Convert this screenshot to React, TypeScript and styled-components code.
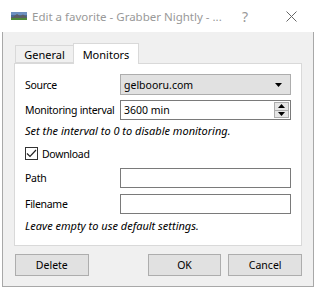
import React from "react";
import styled, { createGlobalStyle } from "styled-components";

const Global = createGlobalStyle`
  html, body { margin: 0; padding: 0; background: #ffffff; }
  body { font-family: "Noto Sans", "Open Sans", sans-serif; font-size: 10.5px; color: #000; }
  * { box-sizing: border-box; }
`;

const Window = styled.div`
  margin-left: 2px;
  width: 312px;
  height: 287px;
  display: flex;
  flex-direction: column;
`;

const TitleBar = styled.div`
  height: 32px;
  background: #fff;
  display: flex;
  align-items: center;
  padding-left: 9px;
  flex-shrink: 0;
`;

const TitleText = styled.span`
  margin-left: 5px;
  color: #999999;
  font-size: 11.5px;
  white-space: nowrap;
  flex: 1;
`;

const TitleButton = styled.span<{ $w: number }>`
  width: ${(p) => p.$w}px;
  display: flex;
  justify-content: center;
  align-items: center;
  color: #999;
  font-size: 14px;
`;

const Body = styled.div`
  flex: 1;
  background: #f0f0f0;
  border: 1px solid #a8a8a8;
  border-top: none;
  padding: 11px 11px 0 11px;
  display: flex;
  flex-direction: column;
`;

const TabBar = styled.div`
  display: flex;
  align-items: flex-end;
  height: 20px;
  padding-left: 1px;
  position: relative;
  z-index: 1;
  flex-shrink: 0;
`;

const Tab = styled.div<{ $active?: boolean }>`
  height: ${(p) => (p.$active ? 21 : 18)}px;
  margin-bottom: ${(p) => (p.$active ? -1 : 0)}px;
  width: ${(p) => (p.$active ? 66 : 58)}px;
  justify-content: center;
  background: ${(p) => (p.$active ? "#fff" : "#f0f0f0")};
  border: 1px solid #d9d9d9;
  border-bottom: ${(p) => (p.$active ? "none" : "1px solid #d9d9d9")};
  ${(p) => (p.$active ? "" : "border-right: none;")}
  display: flex;
  align-items: center;
  line-height: 1;
  font-size: 11px;
`;

const Panel = styled.div`
  height: 183px;
  flex-shrink: 0;
  background: #fff;
  border: 1px solid #d9d9d9;
  padding: 10px 10px 0 10px;
  display: flex;
  flex-direction: column;
`;

const Row = styled.div<{ $mt?: number; $h?: number }>`
  display: grid;
  grid-template-columns: 95px 1fr;
  align-items: center;
  height: ${(p) => p.$h ?? 20}px;
  margin-top: ${(p) => p.$mt ?? 0}px;
  white-space: nowrap;
  flex-shrink: 0;
`;

const Label = styled.span`
  font-size: 10.5px;
  letter-spacing: -0.3px;
`;

const Note = styled.div<{ $mt?: number }>`
  font-style: italic;
  font-size: 11px;
  margin-top: ${(p) => p.$mt ?? 0}px;
  height: 14px;
  line-height: 14px;
  white-space: nowrap;
  flex-shrink: 0;
`;

const Combo = styled.div`
  height: 21px;
  background: #e1e1e1;
  border: 1px solid #adadad;
  display: flex;
  align-items: center;
  justify-content: space-between;
  padding: 0 8px 0 3px;
  font-size: 10.5px;
`;

const Spin = styled.div`
  height: 20px;
  border: 1px solid #7a7a7a;
  display: flex;
  align-items: center;
  padding-left: 3px;
  justify-content: space-between;
  font-size: 10.5px;
`;

const SpinButtons = styled.div`
  width: 15px;
  height: 16px;
  margin-right: 1px;
  display: flex;
  flex-direction: column;
  border: 1px solid #adadad;
  background: #e5e5e5;
`;

const SpinHalf = styled.div<{ $top?: boolean }>`
  flex: 1;
  display: flex;
  align-items: center;
  justify-content: center;
  ${(p) => (p.$top ? "border-bottom: 1px solid #adadad;" : "")}
`;

const Input = styled.div`
  height: 20px;
  border: 1px solid #7a7a7a;
  background: #fff;
`;

const CheckRow = styled.label`
  display: flex;
  align-items: center;
  margin-top: 9px;
  height: 13px;
  flex-shrink: 0;
`;

const CheckBox = styled.span`
  width: 13px;
  height: 13px;
  border: 1px solid #333;
  background: #fff;
  display: flex;
  align-items: center;
  justify-content: center;
  margin-right: 4px;
`;

const Footer = styled.div`
  display: flex;
  margin-top: 8px;
  padding: 0 0 0 1px;
`;

const Button = styled.div<{ $ml?: number }>`
  width: 74px;
  height: 22px;
  background: #e1e1e1;
  border: 1px solid #adadad;
  display: flex;
  align-items: center;
  justify-content: center;
  margin-left: ${(p) => p.$ml ?? 0}px;
`;

const Arrow = ({ up, size = 7 }: { up?: boolean; size?: number }) => (
  <svg width={size} height={4} viewBox="0 0 7 4">
    {up ? <polygon points="3.5,0 7,4 0,4" fill="#000" /> : <polygon points="0,0 7,0 3.5,4" fill="#000" />}
  </svg>
);

const AppIcon = () => (
  <svg width="16" height="8" viewBox="0 0 16 8">
    <rect x="0" y="0" width="16" height="8" fill="#4a6b9a" />
    <rect x="0" y="0" width="16" height="3" fill="#6d8fc0" />
    <polygon points="2,5 6,2 9,4 12,2.5 16,5 16,8 0,8 0,5" fill="#5c5f66" />
    <rect x="0" y="6" width="16" height="2" fill="#4f8a3a" />
  </svg>
);

export default function App() {
  return (
    <>
      <Global />
      <Window>
        <TitleBar>
          <AppIcon />
          <TitleText>Edit a favorite - Grabber Nightly - ...</TitleText>
          <TitleButton $w={46}>?</TitleButton>
          <TitleButton $w={46}>
            <svg width="11" height="11" viewBox="0 0 11 11">
              <path d="M0.5 0.5 L10.5 10.5 M10.5 0.5 L0.5 10.5" stroke="#666" strokeWidth="1" />
            </svg>
          </TitleButton>
        </TitleBar>
        <Body>
          <TabBar>
            <Tab>General</Tab>
            <Tab $active>Monitors</Tab>
          </TabBar>
          <Panel>
            <Row $h={21}>
              <Label>Source</Label>
              <Combo>
                <span>gelbooru.com</span>
                <Arrow />
              </Combo>
            </Row>
            <Row $mt={5}>
              <Label>Monitoring interval</Label>
              <Spin>
                <span>3600 min</span>
                <SpinButtons>
                  <SpinHalf $top>
                    <Arrow up size={7} />
                  </SpinHalf>
                  <SpinHalf>
                    <Arrow size={7} />
                  </SpinHalf>
                </SpinButtons>
              </Spin>
            </Row>
            <Note $mt={4}>Set the interval to 0 to disable monitoring.</Note>
            <CheckRow>
              <CheckBox>
                <svg width="11" height="9" viewBox="0 0 11 9">
                  <path d="M1 4.5 L4 7.5 L10 1" stroke="#222" strokeWidth="1.2" fill="none" />
                </svg>
              </CheckBox>
              <Label>Download</Label>
            </CheckRow>
            <Row $mt={8}>
              <Label>Path</Label>
              <Input />
            </Row>
            <Row $mt={6}>
              <Label>Filename</Label>
              <Input />
            </Row>
            <Note $mt={5}>Leave empty to use default settings.</Note>
          </Panel>
          <Footer>
            <Button>Delete</Button>
            <Button $ml={59}>OK</Button>
            <Button $ml={7}>Cancel</Button>
          </Footer>
        </Body>
      </Window>
    </>
  );
}
